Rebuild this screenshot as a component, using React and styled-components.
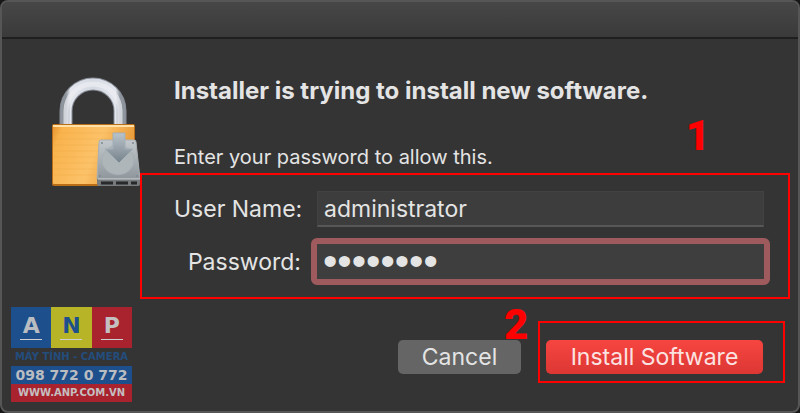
import { useState } from "react";
import styled, { createGlobalStyle } from "styled-components";

const App = () => {

  const [userName, setUserName] = useState("administrator");
  const [password, setPassword] = useState("password");

  const handleSubmit = (e) => {
    e.preventDefault();
  }

  return (
    <>
      <GlobalStyle />
      <Dialog>
        <TitleBar />
        <Form onSubmit={handleSubmit}>
          <Main>
            <LockIcon />
            <Content>
              <Title>Installer is trying to install new software.</Title>
              <Desc>Enter your password to allow this.</Desc>
              <Fields>
                <Field>
                  <Label htmlFor="username">User Name:</Label>
                  <Input id="username" type="text" value={userName} onChange={(e) => setUserName(e.target.value)} />
                </Field>
                <Field>
                  <Label htmlFor="password">Password:</Label>
                  <PasswordInput id="password" type="password" value={password} onChange={(e) => setPassword(e.target.value)} />
                </Field>
                <FieldsMark />
                <FieldsStep>1</FieldsStep>
              </Fields>
            </Content>
          </Main>
          <Footer>
            <Brand>
              <Tiles>
                <Tile $bg="#1d4f8c" $color="#b9bcc0">A</Tile>
                <Tile $bg="#b8b428" $color="#1d4f8c">N</Tile>
                <Tile $bg="#a9232f" $color="#c4bfc0">P</Tile>
              </Tiles>
              <Tagline>MÁY TÍNH - CAMERA</Tagline>
              <Phone>098 772 0 772</Phone>
              <Site href="#">WWW.ANP.COM.VN</Site>
            </Brand>
            <Actions>
              <Button type="button">Cancel</Button>
              <Confirm>
                <Button type="submit" $primary>Install Software</Button>
                <ConfirmMark />
                <ConfirmStep>2</ConfirmStep>
              </Confirm>
            </Actions>
          </Footer>
        </Form>
      </Dialog>
    </>
  );
};

//padlock with the installer disk in front
const LockIcon = () => (
  <Icon viewBox="0 0 92 112" aria-hidden="true">
    <defs>
      <linearGradient id="shackle" x1="0" x2="1" y1="0" y2="0">
        <stop offset="0" stopColor="#8f959d" />
        <stop offset="0.08" stopColor="#e3e6ed" />
        <stop offset="0.5" stopColor="#d5d9e2" />
        <stop offset="0.92" stopColor="#e3e6ed" />
        <stop offset="1" stopColor="#8f959d" />
      </linearGradient>
      <linearGradient id="brass" x1="0" x2="1" y1="0" y2="0.3">
        <stop offset="0" stopColor="#e8932c" />
        <stop offset="0.12" stopColor="#f9b34d" />
        <stop offset="0.6" stopColor="#fcc269" />
        <stop offset="1" stopColor="#e89a38" />
      </linearGradient>
      <linearGradient id="disk" x1="0" x2="0" y1="0" y2="1">
        <stop offset="0" stopColor="#c3c9cd" />
        <stop offset="1" stopColor="#8f979c" />
      </linearGradient>
      <linearGradient id="arrow" x1="0" x2="0" y1="0" y2="1">
        <stop offset="0" stopColor="#b9c3ca" />
        <stop offset="1" stopColor="#76828b" />
      </linearGradient>
    </defs>
    <path d="M14 50V34a27 27 0 0 1 54 0V50" fill="none" stroke="#858a94" strokeWidth="13" />
    <path d="M14 50V34a27 27 0 0 1 54 0V50" fill="none" stroke="url(#shackle)" strokeWidth="11" />
    <path d="M14 48V34a27 27 0 0 1 54 0V48" fill="none" stroke="#eceef4" strokeOpacity="0.7" strokeWidth="5" />
    <rect x="0" y="47" width="83" height="62" rx="2" fill="#b96d17" />
    <rect x="1" y="48" width="81" height="59" rx="1" fill="url(#brass)" />
    <path d="M1 49H82" stroke="#ffe0a6" strokeWidth="2" />
    <path d="M2 56H81M2 62H81M2 68H81M2 74H81M2 80H81M2 86H81M2 92H81M2 98H81" stroke="#e99e3d" strokeOpacity="0.25" />
    <path d="M49 63H82q2 0 2 2L88 102H45L47 65q0-2 2-2Z" fill="url(#disk)" stroke="#a9b0b4" />
    <ellipse cx="66" cy="83" rx="16" ry="15" fill="#aeb6ba" stroke="#a2abb0" strokeOpacity="0.5" />
    <path d="M45 102H88V107q0 2-2 2H47q-2 0-2-2Z" fill="#777b7e" />
    <path d="M49 106H61M64 106H76M79 106H85" stroke="#27292b" strokeWidth="3" />
    <path d="M46 102H88" stroke="#c8cdd0" />
    <circle cx="50" cy="66" r="1" fill="#808990" />
    <circle cx="81" cy="66" r="1" fill="#808990" />
    <circle cx="48" cy="99" r="1" fill="#808990" />
    <circle cx="85" cy="99" r="1" fill="#808990" />
    <path d="M61 56H73V72H81L67 86L53 72H61Z" fill="url(#arrow)" stroke="#a2afb7" />
  </Icon>
);

const GlobalStyle = createGlobalStyle`
  * {
    box-sizing: border-box;
  }

  body {
    margin: 0;
    background-color: #171717;
    font-family: Inter, "Liberation Sans", sans-serif;
  }
`;

const Dialog = styled.main`
  border: 2px solid #565656;
  border-radius: 8px;
  background-color: #343434;
  color: #e4e4e4;
  overflow: hidden;
`;

const TitleBar = styled.header`
  height: 37px;
  background: linear-gradient(#474747, #3a3a3a);
  border-bottom: 2px solid #1f1f1f;
`;

const Form = styled.form``;

const Main = styled.section`
  display: flex;
  gap: 30px;
  padding: 38px 28px 0px 50px;
`;

const Icon = styled.svg`
  flex: none;
  width: 92px;
  height: 112px;
`;

const Content = styled.div`
  flex: 1;
  min-width: 0px;
`;

const Title = styled.h1`
  margin: 0px;
  font-size: 24px;
  line-height: 28px;
  font-weight: 700;
`;

const Desc = styled.p`
  margin: 40px 0px 22px;
  font-size: 20px;
  line-height: 24px;
`;

const Fields = styled.div`
  position: relative;
  display: flex;
  flex-direction: column;
  gap: 11px;
`;

const Field = styled.div`
  display: flex;
  align-items: center;
  gap: 10px;
`;

const Label = styled.label`
  flex: none;
  width: 127px;
  font-size: 23px;
  line-height: 30px;
  text-align: right;
  white-space: nowrap;
`;

const Input = styled.input`
  flex: 1;
  min-width: 0px;
  height: 36px;
  margin: 0px 6px;
  padding: 0px 6px;
  border: 1px solid #424242;
  border-bottom: 2px solid #575757;
  outline: none;
  background-color: #3d3d3d;
  color: #e4e4e4;
  font-family: inherit;
  font-size: 23px;
`;

//larger type, so that the bullets come out as full dots
const PasswordInput = styled(Input)`
  height: 47px;
  margin: 0px;
  border: 6px solid #9f5a5e;
  border-radius: 6px;
  background-color: #3d3e3d;
  font-family: "Liberation Sans", Arial, sans-serif;
  font-size: 41px;
`;

//red frame drawn over a part of the dialog
const Mark = styled.div`
  position: absolute;
  border: 2px solid #ff0000;
  pointer-events: none;
`;

const FieldsMark = styled(Mark)`
  inset: -18px -20px -14px -34px;
`;

const ConfirmMark = styled(Mark)`
  inset: -19px -22px -9px -8px;
`;

const Step = styled.span`
  position: absolute;
  color: #ff0000;
  font-family: Roboto, Arial, sans-serif;
  font-size: 42px;
  line-height: 42px;
  font-weight: 900;
`;

const FieldsStep = styled(Step)`
  top: -76px;
  right: 60px;
`;

const ConfirmStep = styled(Step)`
  top: -36px;
  left: -42px;
`;

const Footer = styled.footer`
  display: flex;
  justify-content: space-between;
  padding: 22px 35px 9px 9px;
`;

const Brand = styled.div`
  display: flex;
  flex-direction: column;
  width: 121px;
  font-family: "DejaVu Sans", Verdana, sans-serif;
  font-weight: 700;
  text-align: center;
  white-space: nowrap;
`;

const Tiles = styled.div`
  display: grid;
  grid-template-columns: repeat(3, 1fr);
`;

const Tile = styled.span`
  display: flex;
  flex-direction: column;
  align-items: center;
  height: 41px;
  padding-top: 8px;
  background-color: ${(props) => props.$bg};
  color: ${(props) => props.$color};
  font-size: 22px;
  line-height: 22px;

  &::after {
    content: "";
    width: 22px;
    height: 1px;
    margin-top: 2px;
    background-color: #cfd0d2;
  }
`;

const Tagline = styled.span`
  color: #234d7d;
  font-size: 10px;
  line-height: 18px;
`;

const Phone = styled.span`
  background-color: #1d4f8c;
  color: #b9bcc0;
  font-size: 14px;
  line-height: 18px;
`;

const Site = styled.a`
  background-color: #a9232f;
  color: #c4bfc0;
  font-size: 10px;
  line-height: 18px;
  text-decoration: none;
`;

const Actions = styled.div`
  display: flex;
  align-items: flex-start;
  gap: 25px;
  padding-top: 33px;
`;

const Confirm = styled.div`
  position: relative;
  display: flex;
`;

const Button = styled.button`
  width: ${(props) => (props.$primary ? "217px" : "123px")};
  height: 34px;
  padding: 0px;
  border: none;
  border-radius: 5px;
  background: ${(props) => (props.$primary ? "linear-gradient(#f74540, #dc3734)" : "#656565")};
  color: ${(props) => (props.$primary ? "#fbe3e2" : "#e4e4e4")};
  font-family: inherit;
  font-size: 23px;
  line-height: 30px;
`;

export default App;
